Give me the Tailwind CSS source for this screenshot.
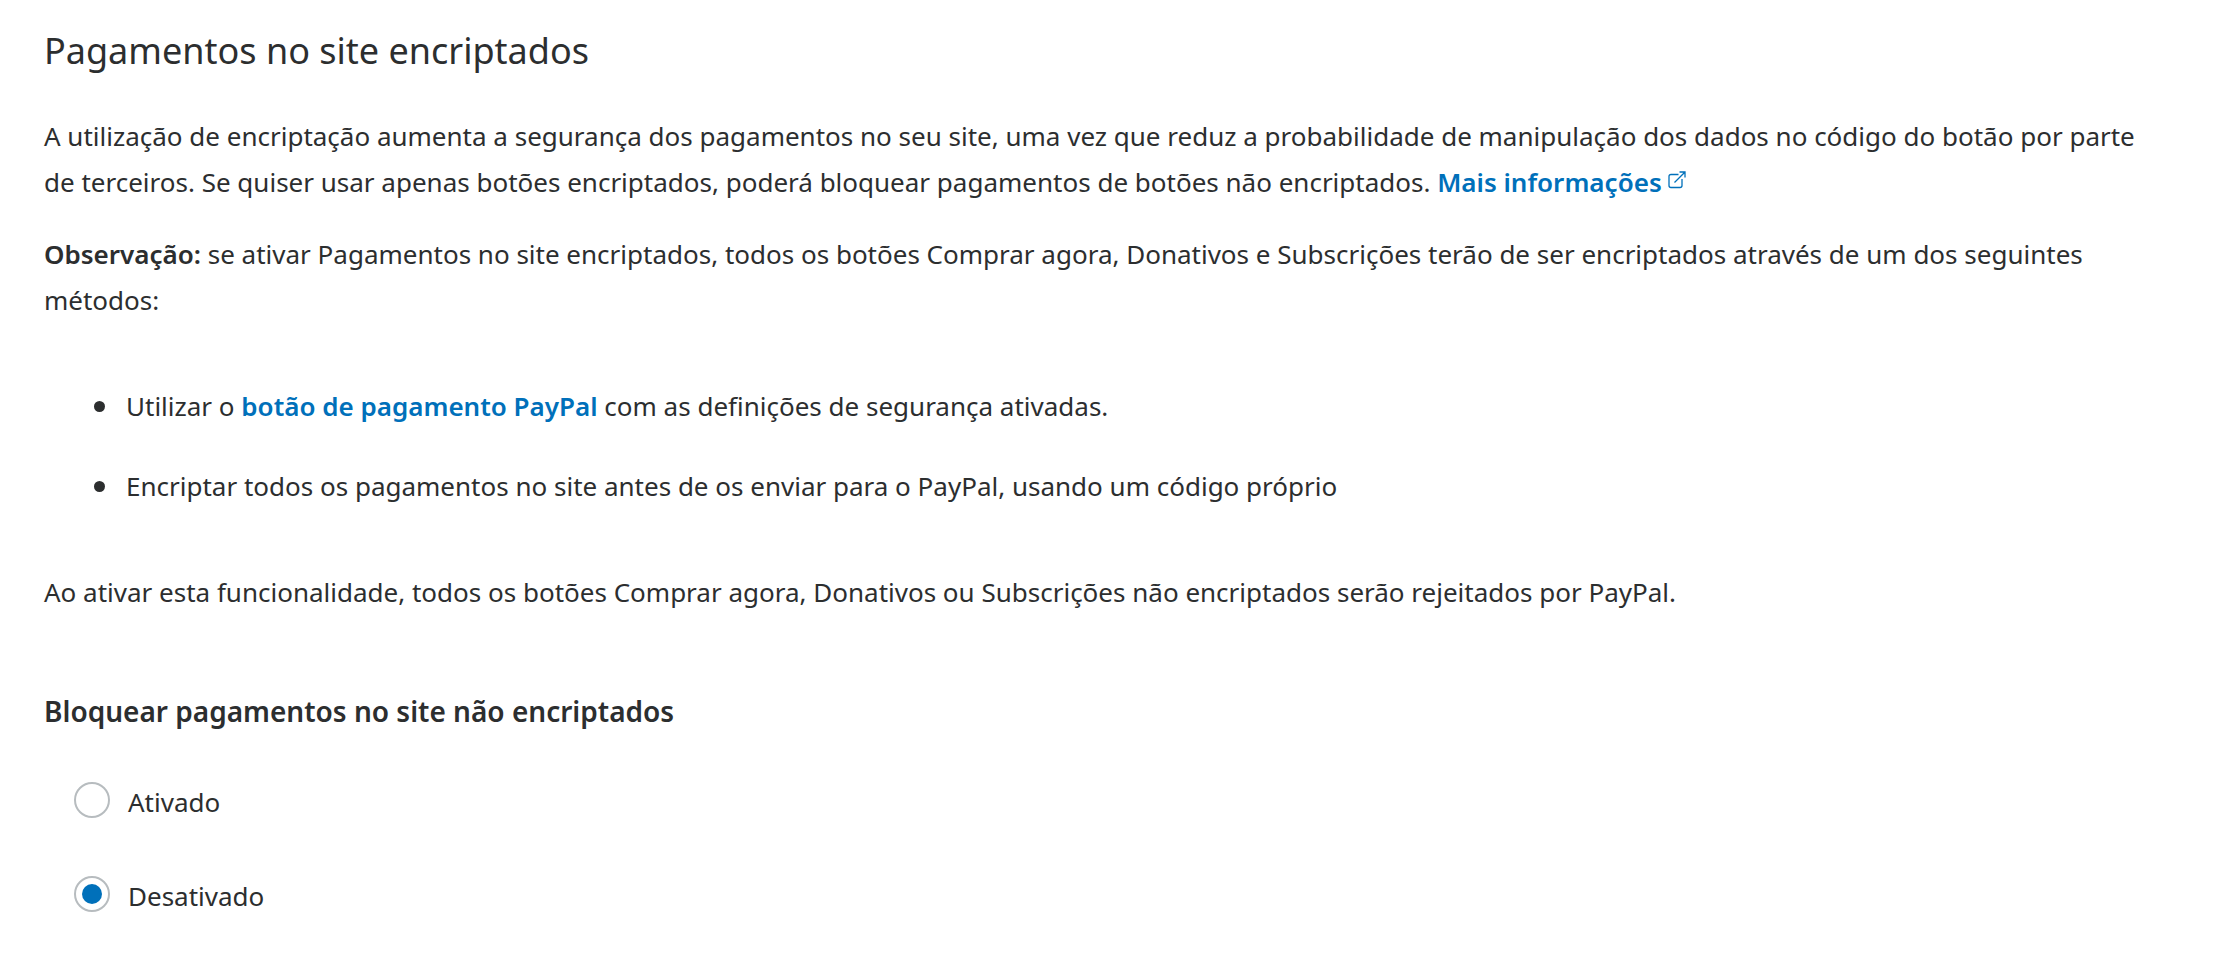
<!DOCTYPE html>
<html lang="pt">
<head>
<meta charset="utf-8">
<title>Pagamentos no site encriptados</title>
<script src="https://cdn.jsdelivr.net/npm/@tailwindcss/browser@4"></script>
</head>
<body class="bg-white font-['Noto_Sans',sans-serif] text-[26px] leading-[46px] text-[#2c2e2f]">
<main class="px-11 pt-7 pb-12">
  <h1 class="text-[36px] leading-[46px]">Pagamentos no site encriptados</h1>
  <p class="mt-[39px]">A utilização de encriptação aumenta a segurança dos pagamentos no seu site, uma vez que reduz a probabilidade de manipulação dos dados no código do botão por parte de terceiros. Se quiser usar apenas botões encriptados, poderá bloquear pagamentos de botões não encriptados. <a href="#" class="whitespace-nowrap font-semibold text-[#0070ba]">Mais informações<svg class="mb-[3px] ml-1.5 inline-block size-[18px] align-baseline" viewBox="0 0 18 18" fill="none" stroke="currentColor" stroke-width="1.3" aria-hidden="true"><path d="M10.5 3.5H3Q1 3.500 1 5.500V14.500Q1 16.500 3 16.500H12Q14 16.500 14 14.500V8M6.500 11.500L16.800 1.200M11.500 1H17V6.500"/></svg></a></p>
  <p class="mt-[26px]"><strong class="font-semibold">Observação:</strong> se ativar Pagamentos no site encriptados, todos os botões Comprar agora, Donativos e Subscrições terão de ser encriptados através de um dos seguintes métodos:</p>
  <ul class="mt-[60px] flex flex-col gap-[34px] pl-[50px]">
    <li class="flex items-center gap-[21px] before:size-[11px] before:shrink-0 before:rounded-full before:bg-[#2c2e2f]"><span>Utilizar o <a href="#" class="font-semibold text-[#0070ba]">botão de pagamento PayPal</a> com as definições de segurança ativadas.</span></li>
    <li class="flex items-center gap-[21px] before:size-[11px] before:shrink-0 before:rounded-full before:bg-[#2c2e2f]"><span>Encriptar todos os pagamentos no site antes de os enviar para o PayPal, usando um código próprio</span></li>
  </ul>
  <p class="mt-[60px]">Ao ativar esta funcionalidade, todos os botões Comprar agora, Donativos ou Subscrições não encriptados serão rejeitados por PayPal.</p>
  <fieldset class="mt-[73px]">
    <legend class="text-[28px] leading-[46px] font-semibold">Bloquear pagamentos no site não encriptados</legend>
    <div class="mt-[45px] flex flex-col items-start gap-12 pl-[30px]">
      <label class="flex items-start gap-[18px]"><input type="radio" name="bloquear" class="mt-[3px] grid size-9 appearance-none place-items-center rounded-full border-2 border-[#b7bcbf] checked:before:size-5 checked:before:rounded-full checked:before:bg-[#0070ba]">Ativado</label>
      <label class="flex items-start gap-[18px]"><input type="radio" name="bloquear" checked class="mt-[3px] grid size-9 appearance-none place-items-center rounded-full border-2 border-[#b7bcbf] checked:before:size-5 checked:before:rounded-full checked:before:bg-[#0070ba]">Desativado</label>
    </div>
  </fieldset>
</main>
</body>
</html>
